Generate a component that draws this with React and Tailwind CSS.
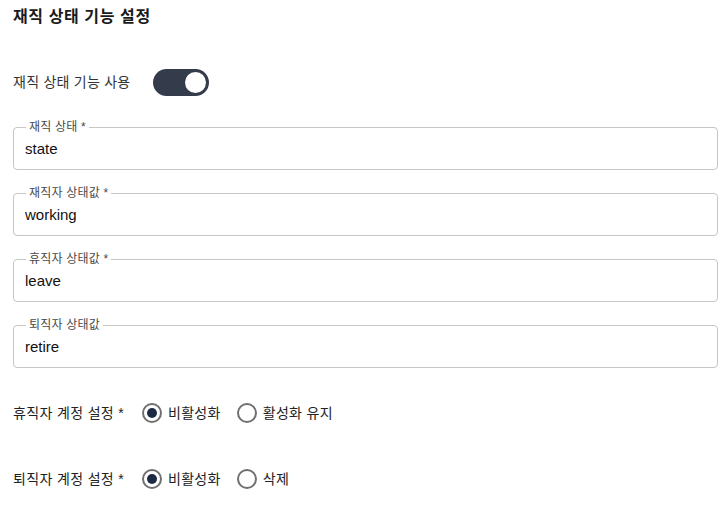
import { useState } from 'react';

const font = 'font-["Liberation_Sans","Noto_Sans_CJK_KR",sans-serif]';

const fields = [
  { label: '재직 상태', required: true, value: 'state' },
  { label: '재직자 상태값', required: true, value: 'working' },
  { label: '휴직자 상태값', required: true, value: 'leave' },
  { label: '퇴직자 상태값', required: false, value: 'retire' },
];

const Radio = ({ checked, label, onClick }) => (
  <button type="button" onClick={onClick} className="flex items-center gap-[6px]">
    <span className="w-[20px] h-[20px] rounded-full border-2 border-[#707070] flex items-center justify-center">
      {checked && <span className="w-[10px] h-[10px] rounded-full bg-[#1c2a46]" />}
    </span>
    <span className="text-[14px] tracking-[0.3px] text-[#222]">{label}</span>
  </button>
);

const App = () => {
  const [enabled, setEnabled] = useState(true);
  const [leaveMode, setLeaveMode] = useState('disable');
  const [retireMode, setRetireMode] = useState('disable');

  return (
    <div className={`${font} bg-white min-h-[505px] pl-[13px] pr-[8px] pt-[5px]`}>
      <h1 className="text-[16px] leading-[24px] tracking-[0.6px] font-bold text-[#1a1a1a]">재직 상태 기능 설정</h1>

      <div className="mt-10 flex items-center h-[27px]">
        <span className="text-[14px] tracking-[0.25px] text-[#333] w-[140px]">재직 상태 기능 사용</span>
        <button
          type="button"
          onClick={() => setEnabled(!enabled)}
          className={`w-[56px] h-[27px] rounded-full flex items-center px-[3px] ${enabled ? 'bg-[#343b4b] justify-end' : 'bg-gray-300 justify-start'}`}
        >
          <span className="w-[21px] h-[21px] rounded-full bg-white" />
        </button>
      </div>

      <div className="mt-6 flex flex-col gap-4">
        {fields.map((f) => (
          <fieldset key={f.label} className="m-0 border border-[#c6c6c6] rounded px-[11px] pb-[10px] h-[50px]">
            <legend className="ml-[1px] px-[3px] text-[12px] leading-[14px] tracking-[0.2px] text-[#4a4a4a]">
              {f.label}{f.required && ' *'}
            </legend>
            <div className="pt-[6px] text-[15px] leading-[18px] text-[#111]">{f.value}</div>
          </fieldset>
        ))}
      </div>

      <div className="mt-[35px] flex items-center h-[20px]">
        <span className="text-[14px] tracking-[0.35px] text-[#222] w-[129px]">휴직자 계정 설정 *</span>
        <div className="flex items-center gap-[16px]">
          <Radio checked={leaveMode === 'disable'} label="비활성화" onClick={() => setLeaveMode('disable')} />
          <Radio checked={leaveMode === 'keep'} label="활성화 유지" onClick={() => setLeaveMode('keep')} />
        </div>
      </div>

      <div className="mt-[46px] flex items-center h-[20px]">
        <span className="text-[14px] tracking-[0.35px] text-[#222] w-[129px]">퇴직자 계정 설정 *</span>
        <div className="flex items-center gap-[16px]">
          <Radio checked={retireMode === 'disable'} label="비활성화" onClick={() => setRetireMode('disable')} />
          <Radio checked={retireMode === 'delete'} label="삭제" onClick={() => setRetireMode('delete')} />
        </div>
      </div>
    </div>
  );
};

export default App;
